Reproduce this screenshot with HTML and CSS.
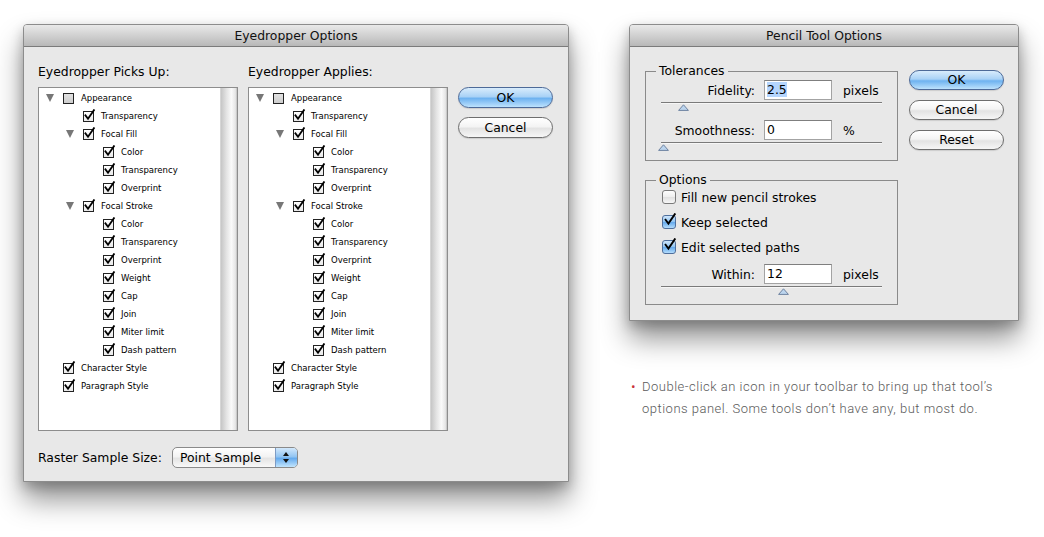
FILE: index.html
```html
<!DOCTYPE html>
<html lang="en">
<head>
    <meta charset="UTF-8">
    <meta name="viewport" content="width=device-width, initial-scale=1.0">
    <title>Tool Options Dialogs</title>
    <link rel="stylesheet" href="styles.css">
</head>
<body>
    <svg class="defs" width="0" height="0">
        <symbol id="tick" viewBox="0 0 14 14">
            <path d="M2.6 6.8 L5.4 10.6 L11.8 1.2" fill="none" stroke="#000" stroke-width="1.9" stroke-linecap="square" stroke-linejoin="miter"/>
        </symbol>
        <symbol id="thumb" viewBox="0 0 11 7">
            <path d="M0.6 6.4 L5.5 0.8 L10.4 6.4 Z" fill="#bcd5ee" stroke="#6e82a0" stroke-width="1"/>
        </symbol>
    </svg>

    <div class="page">
        <div class="dialog eye">
            <div class="titlebar">Eyedropper Options</div>
            <div class="eye-body">
                <div class="eye-cols">
                    <div class="col">
                        <div class="col-label">Eyedropper Picks Up:</div>
                        <div class="listbox">
                            <div class="list">
                                <div class="row l0"><i class="tw"></i><span class="cb mixed"></span>Appearance</div>
                                <div class="row l1"><i class="tw none"></i><span class="cb"><svg class="tick"><use href="#tick"/></svg></span>Transparency</div>
                                <div class="row l1"><i class="tw"></i><span class="cb"><svg class="tick"><use href="#tick"/></svg></span>Focal Fill</div>
                                <div class="row l2"><i class="tw none"></i><span class="cb"><svg class="tick"><use href="#tick"/></svg></span>Color</div>
                                <div class="row l2"><i class="tw none"></i><span class="cb"><svg class="tick"><use href="#tick"/></svg></span>Transparency</div>
                                <div class="row l2"><i class="tw none"></i><span class="cb"><svg class="tick"><use href="#tick"/></svg></span>Overprint</div>
                                <div class="row l1"><i class="tw"></i><span class="cb"><svg class="tick"><use href="#tick"/></svg></span>Focal Stroke</div>
                                <div class="row l2"><i class="tw none"></i><span class="cb"><svg class="tick"><use href="#tick"/></svg></span>Color</div>
                                <div class="row l2"><i class="tw none"></i><span class="cb"><svg class="tick"><use href="#tick"/></svg></span>Transparency</div>
                                <div class="row l2"><i class="tw none"></i><span class="cb"><svg class="tick"><use href="#tick"/></svg></span>Overprint</div>
                                <div class="row l2"><i class="tw none"></i><span class="cb"><svg class="tick"><use href="#tick"/></svg></span>Weight</div>
                                <div class="row l2"><i class="tw none"></i><span class="cb"><svg class="tick"><use href="#tick"/></svg></span>Cap</div>
                                <div class="row l2"><i class="tw none"></i><span class="cb"><svg class="tick"><use href="#tick"/></svg></span>Join</div>
                                <div class="row l2"><i class="tw none"></i><span class="cb"><svg class="tick"><use href="#tick"/></svg></span>Miter limit</div>
                                <div class="row l2"><i class="tw none"></i><span class="cb"><svg class="tick"><use href="#tick"/></svg></span>Dash pattern</div>
                                <div class="row l0"><i class="tw none"></i><span class="cb"><svg class="tick"><use href="#tick"/></svg></span>Character Style</div>
                                <div class="row l0"><i class="tw none"></i><span class="cb"><svg class="tick"><use href="#tick"/></svg></span>Paragraph Style</div>
                            </div>
                            <div class="scroll"></div>
                        </div>
                    </div>

                    <div class="col">
                        <div class="col-label">Eyedropper Applies:</div>
                        <div class="listbox">
                            <div class="list">
                                <div class="row l0"><i class="tw"></i><span class="cb mixed"></span>Appearance</div>
                                <div class="row l1"><i class="tw none"></i><span class="cb"><svg class="tick"><use href="#tick"/></svg></span>Transparency</div>
                                <div class="row l1"><i class="tw"></i><span class="cb"><svg class="tick"><use href="#tick"/></svg></span>Focal Fill</div>
                                <div class="row l2"><i class="tw none"></i><span class="cb"><svg class="tick"><use href="#tick"/></svg></span>Color</div>
                                <div class="row l2"><i class="tw none"></i><span class="cb"><svg class="tick"><use href="#tick"/></svg></span>Transparency</div>
                                <div class="row l2"><i class="tw none"></i><span class="cb"><svg class="tick"><use href="#tick"/></svg></span>Overprint</div>
                                <div class="row l1"><i class="tw"></i><span class="cb"><svg class="tick"><use href="#tick"/></svg></span>Focal Stroke</div>
                                <div class="row l2"><i class="tw none"></i><span class="cb"><svg class="tick"><use href="#tick"/></svg></span>Color</div>
                                <div class="row l2"><i class="tw none"></i><span class="cb"><svg class="tick"><use href="#tick"/></svg></span>Transparency</div>
                                <div class="row l2"><i class="tw none"></i><span class="cb"><svg class="tick"><use href="#tick"/></svg></span>Overprint</div>
                                <div class="row l2"><i class="tw none"></i><span class="cb"><svg class="tick"><use href="#tick"/></svg></span>Weight</div>
                                <div class="row l2"><i class="tw none"></i><span class="cb"><svg class="tick"><use href="#tick"/></svg></span>Cap</div>
                                <div class="row l2"><i class="tw none"></i><span class="cb"><svg class="tick"><use href="#tick"/></svg></span>Join</div>
                                <div class="row l2"><i class="tw none"></i><span class="cb"><svg class="tick"><use href="#tick"/></svg></span>Miter limit</div>
                                <div class="row l2"><i class="tw none"></i><span class="cb"><svg class="tick"><use href="#tick"/></svg></span>Dash pattern</div>
                                <div class="row l0"><i class="tw none"></i><span class="cb"><svg class="tick"><use href="#tick"/></svg></span>Character Style</div>
                                <div class="row l0"><i class="tw none"></i><span class="cb"><svg class="tick"><use href="#tick"/></svg></span>Paragraph Style</div>
                            </div>
                            <div class="scroll"></div>
                        </div>
                    </div>

                    <div class="btns eye-btns">
                        <div class="btn default">OK</div>
                        <div class="btn">Cancel</div>
                    </div>
                </div>

                <div class="raster">
                    <span>Raster Sample Size:</span>
                    <div class="popup">
                        <span class="popup-val">Point Sample</span>
                        <span class="popup-arrows"><i class="up"></i><i class="down"></i></span>
                    </div>
                </div>
            </div>
        </div>

        <div class="right">
            <div class="dialog pencil">
                <div class="titlebar">Pencil Tool Options</div>
                <div class="pencil-body">
                    <div class="groups">
                        <fieldset class="group">
                            <legend>Tolerances</legend>
                            <div class="field first">
                                <span class="field-label">Fidelity:</span>
                                <span class="input"><span class="sel">2.5</span></span>
                                <span class="unit">pixels</span>
                            </div>
                            <div class="slider"><svg class="thumb" style="left:17px"><use href="#thumb"/></svg></div>
                            <div class="field">
                                <span class="field-label">Smoothness:</span>
                                <span class="input">0</span>
                                <span class="unit">%</span>
                            </div>
                            <div class="slider"><svg class="thumb" style="left:-3px"><use href="#thumb"/></svg></div>
                        </fieldset>

                        <fieldset class="group options">
                            <legend>Options</legend>
                            <div class="check"><span class="acb"></span>Fill new pencil strokes</div>
                            <div class="check"><span class="acb on"><svg class="tick"><use href="#tick"/></svg></span>Keep selected</div>
                            <div class="check"><span class="acb on"><svg class="tick"><use href="#tick"/></svg></span>Edit selected paths</div>
                            <div class="field within">
                                <span class="field-label">Within:</span>
                                <span class="input">12</span>
                                <span class="unit">pixels</span>
                            </div>
                            <div class="slider"><svg class="thumb" style="left:117px"><use href="#thumb"/></svg></div>
                        </fieldset>
                    </div>

                    <div class="btns pencil-btns">
                        <div class="btn default">OK</div>
                        <div class="btn">Cancel</div>
                        <div class="btn">Reset</div>
                    </div>
                </div>
            </div>

            <p class="note">Double-click an icon in your toolbar to bring up that tool’s<br>options panel. Some tools don’t have any, but most do.</p>
        </div>
    </div>
</body>
</html>
```

FILE: styles.css
```css
html,body,div,span,p{margin:0; padding:0;}
body{background:#fff; font-family:"DejaVu Sans", Verdana, sans-serif; font-size:12.4px; color:#000;}
.defs{position:absolute; width:0; height:0;}

.page{display:flex; align-items:flex-start; gap:60px; padding:24px 0 60px 23px;}

/* window frame */
.dialog{background:#e8e8e8; border:1px solid #8c8c8c; border-radius:4px 4px 0 0;
    box-shadow:0 18px 28px rgba(0,0,0,.42), 0 5px 12px rgba(0,0,0,.22);}
.titlebar{height:21px; line-height:21px; text-align:center; font-size:12.4px; color:#111;
    background:linear-gradient(#e9e9e9, #d3d3d3 45%, #b8b8b8); border-bottom:1px solid #7b7b7b; border-radius:3px 3px 0 0;}

/* eyedropper */
.eye{width:544px;}
.eye-body{padding:17px 14px 13px 14px;}
.eye-cols{display:flex; gap:10px;}
.col{width:200px;}
.col-label{height:16px; line-height:16px; margin-bottom:7px;}
.listbox{display:flex; height:344px; box-sizing:border-box; border:1px solid #8d8d8d; background:#fff;}
.list{flex:1; padding-top:1px;}
.scroll{width:16px; border-left:1px solid #d6d6d6;
    background:linear-gradient(to right, #c6c6c6, #e4e4e4 35%, #fafafa 65%, #e6e6e6 90%, #bdbdbd);}

.row{display:flex; align-items:center; height:18px; font-size:8.5px; color:#000;}
.row.l0{padding-left:7px;}
.row.l1{padding-left:27px;}
.row.l2{padding-left:47px;}
.tw{width:0; height:0; margin-right:9px; border-left:4.5px solid transparent; border-right:4.5px solid transparent; border-top:8px solid #777;}
.tw.none{border-top-color:transparent;}
.cb{position:relative; width:11px; height:11px; box-sizing:border-box; margin-right:7px; border:1px solid #222;
    background:linear-gradient(#fff, #e9e9e9);}
.cb.mixed{background:linear-gradient(#e2e2e2, #cdcdcd);}
.cb .tick{position:absolute; left:-1px; top:-3px; width:13px; height:13px;}

/* aqua buttons */
.btns{display:flex; flex-direction:column; width:95px;}
.eye-btns{padding-top:23px; gap:9px;}
.btn{height:21px; box-sizing:border-box; border:1px solid #6e6e6e; border-radius:11px; text-align:center; line-height:19px;
    background:linear-gradient(#ffffff, #f4f4f4 45%, #e3e3e3 55%, #f6f6f6); box-shadow:0 1px 1px rgba(0,0,0,.12);}
.btn.default{border-color:#4d6a98; background:linear-gradient(#d8ecfc, #a9d2f6 45%, #6eb2f0 55%, #bde2fd);}

/* raster popup */
.raster{display:flex; align-items:center; margin-top:16px; height:21px;}
.popup{display:flex; width:126px; height:21px; box-sizing:border-box; margin-left:10px; border:1px solid #8a8a8a; border-radius:5px; overflow:hidden;
    background:linear-gradient(#ffffff, #f3f3f3 45%, #e4e4e4 55%, #f9f9f9);}
.popup-val{flex:1; padding-left:7px; line-height:19px;}
.popup-arrows{width:21px; border-left:1px solid #7d9bc4; display:flex; flex-direction:column; align-items:center; justify-content:center; gap:3px;
    background:linear-gradient(#d2e8fc, #93c5f2 45%, #66abee 55%, #c2e5fd);}
.popup-arrows i{width:0; height:0; border-left:3px solid transparent; border-right:3px solid transparent;}
.popup-arrows .up{border-bottom:4px solid #111;}
.popup-arrows .down{border-top:4px solid #111;}

/* pencil */
.right{display:flex; flex-direction:column;}
.pencil{width:388px;}
.pencil-body{display:flex; gap:11px; padding:16px 14px 15px 15px;}
.groups{width:253px;}
.group{margin:0; padding:0 15px; border:1px solid #8a8a8a; min-width:0;}
.group legend{padding:0 3px; margin-left:-5px; line-height:16px;}
.group.options{margin-top:11px;}

.field{display:flex; align-items:center; height:20px;}
.field.first{margin-top:1px;}
.field.within{margin-top:7px;}
.field-label{width:94px; text-align:right; margin-right:9px;}
.input{width:68px; height:20px; box-sizing:border-box; border:1px solid #a3a3a3; border-top-color:#7f7f7f; background:#fff;
    padding-left:2px; line-height:18px; margin-right:11px;}
.sel{background:#b4d5fe;}
.slider{position:relative; height:20px;}
.slider::before{content:""; position:absolute; left:0; right:0; top:2px; height:1px; background:#7a7a7a;}
.slider::after{content:""; position:absolute; left:0; right:0; top:3px; height:1px; background:#f6f6f6;}
.thumb{position:absolute; top:4px; width:11px; height:7px;}
.options .slider{height:20px;}

.check{display:flex; align-items:center; height:20px; margin-top:5px;}
.options legend + .check{margin-top:-1px;}
.acb{position:relative; width:14px; height:14px; box-sizing:border-box; margin:0 5px 0 1px; border:1px solid #7a7a7a; border-radius:3px;
    background:linear-gradient(#fdfdfd, #eeeeee 50%, #e0e0e0 51%, #f7f7f7);}
.acb.on{border-color:#4f6f9c; background:linear-gradient(#cfe6fb, #8ec3f2 50%, #62a8ec 51%, #b3dcfc);}
.acb .tick{position:absolute; left:0; top:-3px; width:14px; height:14px;}

.pencil-btns{padding-top:7px; gap:10px;}
.pencil-btns .btn{height:20px; line-height:18px;}

.note{position:relative; margin-top:55px; padding-left:13px; font-family:Roboto, "Liberation Sans", sans-serif; font-weight:300; font-size:13px; letter-spacing:0.5px; line-height:22px; color:#5a5a5a; white-space:nowrap;}
.note::before{content:"•"; position:absolute; left:2px; top:0; color:#c8333a; font-size:14px;}
```
